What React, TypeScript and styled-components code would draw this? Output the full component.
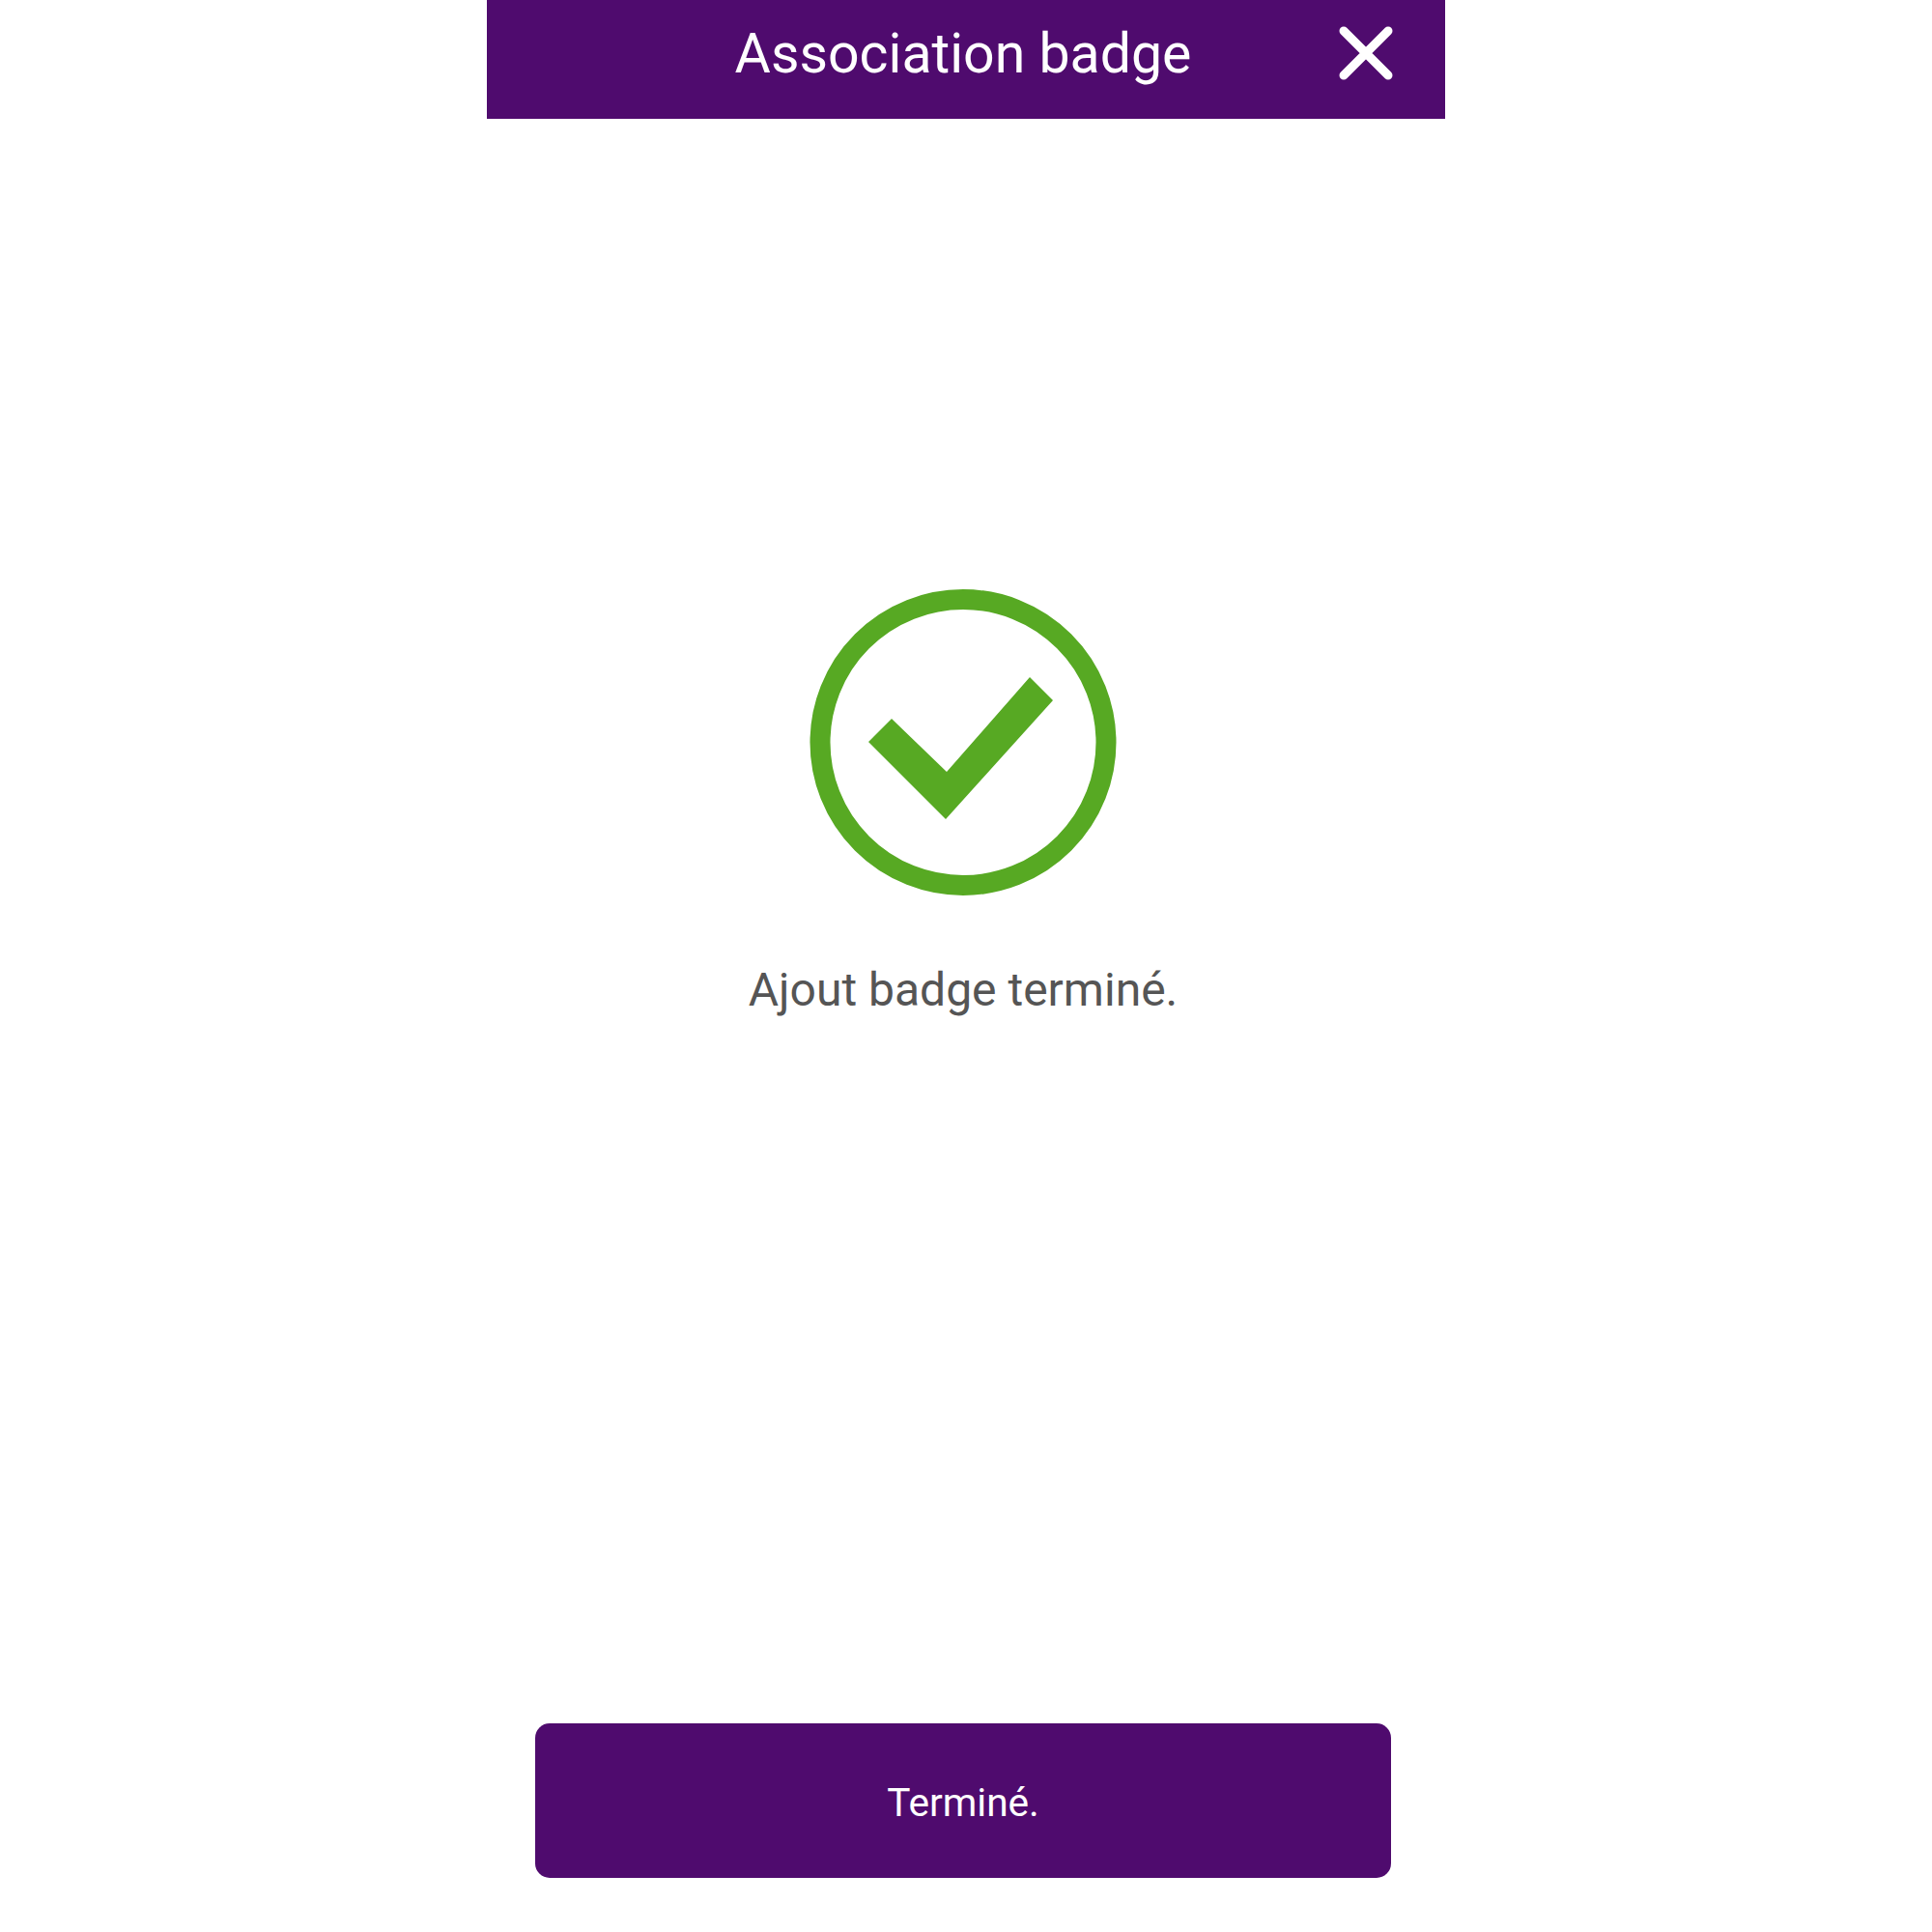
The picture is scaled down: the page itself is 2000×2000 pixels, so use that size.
import React from 'react';
import styled, { createGlobalStyle } from 'styled-components';

const GlobalStyle = createGlobalStyle`
  html,
  body {
    margin: 0;
    padding: 0;
    background: #ffffff;
  }
`;

const Screen = styled.div`
  display: flex;
  flex-direction: column;
  width: 992px;
  height: 2000px;
  margin: 0 auto;
  font-family: Roboto, 'Liberation Sans', sans-serif;
`;

const Header = styled.header`
  display: grid;
  grid-template-columns: 1fr auto 1fr;
  align-items: center;
  height: 123px;
  padding: 0 6px 14px 0;
  box-sizing: border-box;
  background: #4f0b6e;
  color: #ffffff;
`;

const Title = styled.h1`
  grid-column: 2;
  margin: 2px 0 0;
  font-size: 57.2px;
  font-weight: 400;
  line-height: 64px;
  white-space: nowrap;
`;

const CloseButton = styled.button`
  grid-column: 3;
  justify-self: end;
  display: flex;
  margin: 0 48px 0 0;
  padding: 0;
  border: 0;
  background: none;
`;

const Content = styled.main`
  flex: 1;
  display: flex;
  flex-direction: column;
  align-items: center;
  padding: 487px 6px 0 0;
`;

const Message = styled.p`
  margin: 71px 0 0;
  font-size: 48px;
  line-height: 54px;
  color: #555555;
  white-space: nowrap;
`;

const Footer = styled.footer`
  display: flex;
  padding: 0 56px 56px 50px;
`;

const DoneButton = styled.button`
  flex: 1;
  height: 160px;
  padding: 3px 0 0;
  border: 0;
  border-radius: 15px;
  background: #4f0b6e;
  color: #ffffff;
  font-family: inherit;
  font-size: 40.6px;
  font-weight: 400;
`;

const CloseIcon = () => (
  <svg width="56" height="56" viewBox="0 0 56 56" fill="none">
    <path d="M5 5 L51 51 M51 5 L5 51" stroke="#ffffff" strokeWidth="9" strokeLinecap="round" />
  </svg>
);

const SuccessIcon = () => (
  <svg width="318" height="317" viewBox="0 0 318 317" fill="none">
    <circle cx="159" cy="158.5" r="148" stroke="#57a923" strokeWidth="21" />
    <polygon points="61,158 85,134 142,189 228,91 252,115 141,238" fill="#57a923" />
  </svg>
);

const App = () => (
  <>
    <GlobalStyle />
    <Screen>
      <Header>
        <Title>Association badge</Title>
        <CloseButton aria-label="Fermer">
          <CloseIcon />
        </CloseButton>
      </Header>
      <Content>
        <SuccessIcon />
        <Message>Ajout badge terminé.</Message>
      </Content>
      <Footer>
        <DoneButton>Terminé.</DoneButton>
      </Footer>
    </Screen>
  </>
);

export default App;
